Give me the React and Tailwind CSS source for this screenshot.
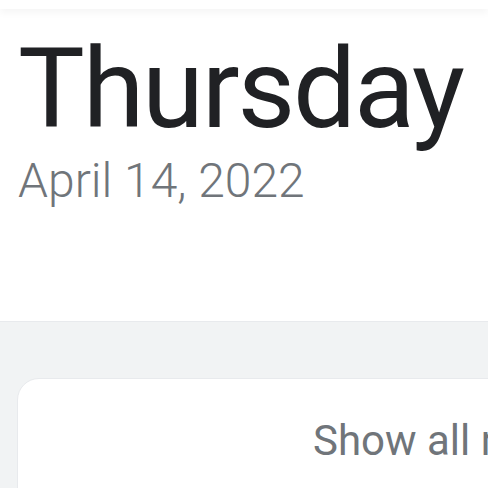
import React from "react";

const App = () => {
  return (
    <div className="h-[488px] w-[488px] overflow-hidden bg-white font-['Roboto',sans-serif]">
      <div className="relative z-10 h-[9px] bg-white shadow-[0_3px_8px_rgba(0,0,0,0.05)]" />

      <div className="h-[312px] px-[18px] pt-[24px]">
        <h1 className="text-[112px] leading-[112px] font-normal tracking-[-2.2px] text-[#202124]">
          Thursday
        </h1>
        <p className="mt-[12px] text-[48px] leading-[48px] font-light text-[#70757a]">April 14, 2022</p>
      </div>

      <section className="h-[200px] border-t border-[#e8eaed] bg-[#f1f3f4] pl-[17px] pt-[56px]">
        <div className="h-[140px] w-[700px] rounded-[22px] border border-[#e8eaed] bg-white pl-[295px] pt-[41px]">
          <span className="whitespace-nowrap text-[42px] leading-[42px] text-[#70757a]">
            Show all reminders
          </span>
        </div>
      </section>
    </div>
  );
};

export default App;
